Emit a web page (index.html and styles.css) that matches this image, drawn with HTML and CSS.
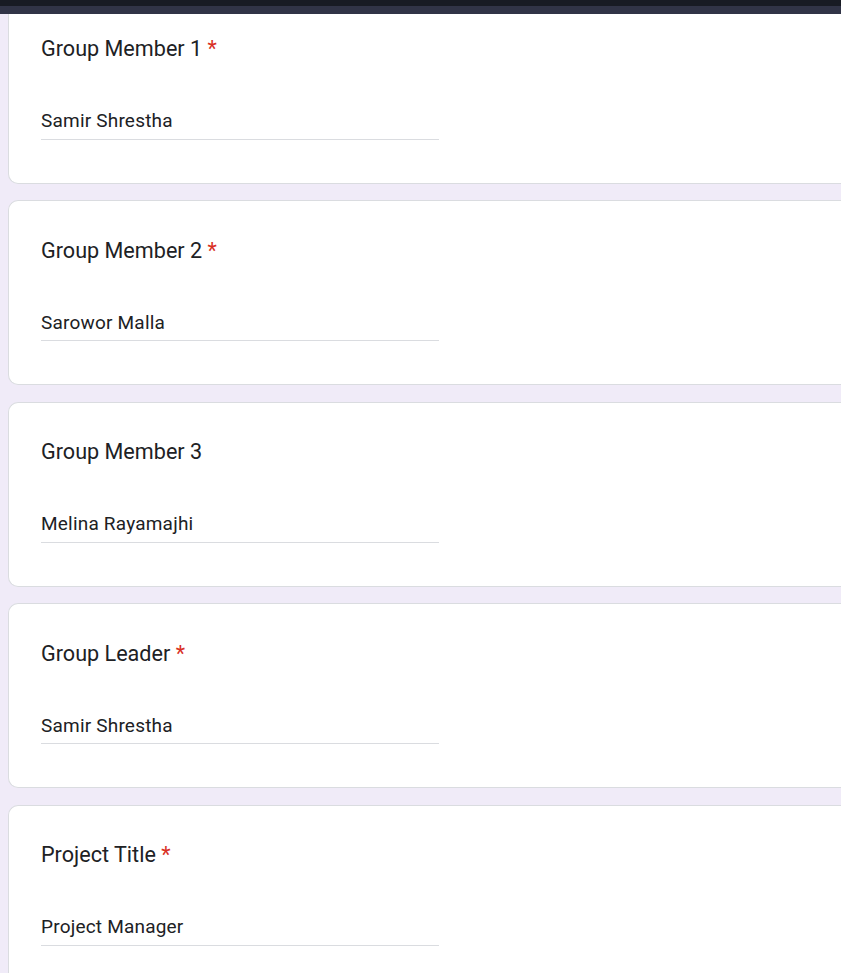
FILE: index.html
```html
<!DOCTYPE html>
<html lang="en">
<head>
<meta charset="utf-8">
<title>Form</title>
<link rel="stylesheet" href="styles.css">
</head>
<body>
<div class="topbar"><div class="topbar-dark"></div><div class="topbar-light"></div></div>
<main class="form">
  <section class="card">
    <div class="q-title">Group Member 1 <span class="req">*</span></div>
    <div class="answer">Samir Shrestha</div>
  </section>
  <section class="card">
    <div class="q-title">Group Member 2 <span class="req">*</span></div>
    <div class="answer">Sarowor Malla</div>
  </section>
  <section class="card">
    <div class="q-title">Group Member 3</div>
    <div class="answer">Melina Rayamajhi</div>
  </section>
  <section class="card">
    <div class="q-title">Group Leader <span class="req">*</span></div>
    <div class="answer">Samir Shrestha</div>
  </section>
  <section class="card">
    <div class="q-title">Project Title <span class="req">*</span></div>
    <div class="answer">Project Manager</div>
  </section>
</main>
</body>
</html>
```
FILE: styles.css
```css
html, body {
  margin: 0;
  padding: 0;
  background: #f0ebf8;
  overflow: hidden;
}
body {
  font-family: Roboto, "Liberation Sans", Arial, sans-serif;
  color: #202124;
}
.topbar {
  position: fixed;
  top: 0;
  left: 0;
  right: 0;
  z-index: 10;
  display: flex;
  flex-direction: column;
}
.topbar-dark {
  height: 6px;
  background: #181b24;
}
.topbar-light {
  height: 8px;
  background: #313447;
}
.form {
  display: flex;
  flex-direction: column;
  gap: 16.5px;
  padding-left: 8px;
  margin-top: -1.5px;
}
.card {
  background: #fff;
  border: 1px solid #dadce0;
  border-right: none;
  border-radius: 10px 0 0 10px;
  height: 185px;
  box-sizing: border-box;
  padding: 37.5px 0 0 32px;
  display: flex;
  flex-direction: column;
}
.q-title {
  font-size: 21.6px;
  line-height: 24px;
  color: #202124;
}
.req {
  color: #d93025;
}
.answer {
  margin-top: 48px;
  width: 398px;
  font-size: 19px;
  line-height: 24px;
  letter-spacing: 0.2px;
  padding-bottom: 5.5px;
  border-bottom: 1px solid #dadce0;
  color: #202124;
}
```
